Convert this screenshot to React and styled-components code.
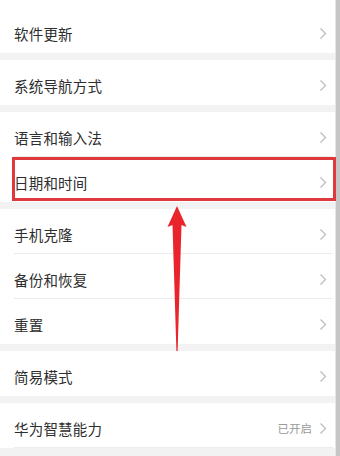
import React from "react";
import styled, { createGlobalStyle } from "styled-components";

const GlobalStyle = createGlobalStyle`
  html, body {
    margin: 0;
    padding: 0;
    background: #f2f2f2;
  }
  body {
    font-family: "Noto Sans CJK SC", "Noto Sans", sans-serif;
  }
`;

const sections = [
  [{ label: "软件更新" }],
  [{ label: "系统导航方式" }],
  [{ label: "语言和输入法" }, { label: "日期和时间", highlighted: true }],
  [{ label: "手机克隆" }, { label: "备份和恢复" }, { label: "重置" }],
  [{ label: "简易模式" }],
  [{ label: "华为智慧能力", value: "已开启" }],
];

const Chevron = () => (
  <svg width="8" height="13" viewBox="0 0 8 13">
    <path d="M1.5 1.5 L6.5 6.5 L1.5 11.5" fill="none" stroke="#bdbdbd" strokeWidth="1.3" />
  </svg>
);

const App = () => {
  return (
    <>
      <GlobalStyle />
      <Page>
        <Content>
          <TopStub />
          {sections.map((rows, si) => (
            <Section key={si}>
              {rows.map((row, ri) => (
                <Row key={ri} $highlighted={row.highlighted} $last={ri === rows.length - 1 && si !== sections.length - 1}>
                  <Label>{row.label}</Label>
                  <Right>
                    {row.value && <Value>{row.value}</Value>}
                    <Chevron />
                  </Right>
                </Row>
              ))}
            </Section>
          ))}
          <Arrow width="22" height="146" viewBox="0 0 22 146">
            <path d="M11 0 L20.5 21 L15.5 19 L11.6 145 L10.4 145 L6.5 19 L1.5 21 Z" fill="#e9252b" />
          </Arrow>
        </Content>
        <Scrollbar />
      </Page>
    </>
  );
};

const Page = styled.div`
  display: flex;
  width: 340px;
  height: 456px;
  overflow: hidden;
`;

const Content = styled.div`
  position: relative;
  flex: 1;
  display: flex;
  flex-direction: column;
  gap: 7px;
  background: #f2f2f2;
`;

const Scrollbar = styled.div`
  width: 4px;
  background: #c6c6c6;
  border-left: 1px solid #e6e6e6;
`;

const TopStub = styled.div`
  height: 8px;
  background: #fff;
  margin-bottom: -7px;
  &::after {
    content: "";
    display: block;
    height: 8px;
    margin-left: 14px;
    margin-right: 2px;
    border-bottom: 1px solid #ececec;
  }
`;

const Section = styled.div`
  background: #fff;
  display: flex;
  flex-direction: column;
`;

const Row = styled.div`
  position: relative;
  height: 45px;
  display: flex;
  align-items: center;
  justify-content: space-between;
  padding: 5px 8px 0 14px;
  box-sizing: border-box;
  &::after {
    content: "";
    position: absolute;
    left: 14px;
    right: 2px;
    bottom: 0;
    border-bottom: 1px solid ${(p) => (p.$last ? "transparent" : "#ececec")};
  }
  &::before {
    content: "";
    display: ${(p) => (p.$highlighted ? "block" : "none")};
    position: absolute;
    left: 12px;
    right: -1px;
    top: 0;
    bottom: 1px;
    border: 3px solid #e0393d;
    box-sizing: border-box;
    z-index: 1;
  }
`;

const Label = styled.span`
  font-size: 14.5px;
  color: #2e2e2e;
  letter-spacing: 0.2px;
`;

const Right = styled.div`
  display: flex;
  align-items: center;
  gap: 7px;
`;

const Value = styled.span`
  font-size: 11.5px;
  color: #9a9a9a;
`;

const Arrow = styled.svg`
  position: absolute;
  left: 166px;
  top: 206px;
  z-index: 2;
`;

export default App;
